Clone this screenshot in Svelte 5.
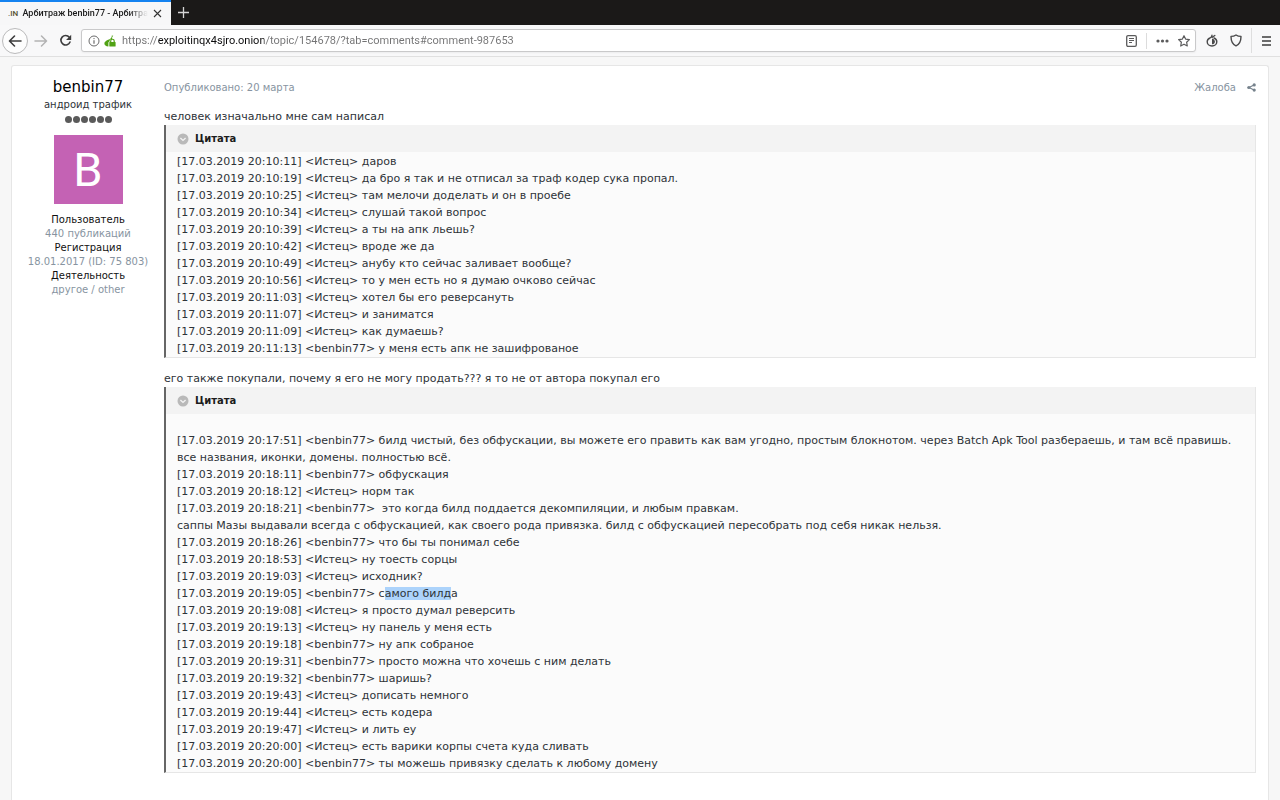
<script lang="ts">
	type Line = { time: string; who: string; text: string; marked?: string; tail?: string };

	const url = "https://exploitinqx4sjro.onion/topic/154678/?tab=comments#comment-987653";

	const profile = [
		["Пользователь", "440 публикаций"],
		["Регистрация", "18.01.2017 (ID: 75 803)"],
		["Деятельность", "другое / other"]
	];

	const firstLog: Line[] = [
		{ time: "20:10:11", who: "Истец", text: "даров" },
		{ time: "20:10:19", who: "Истец", text: "да бро я так и не отписал за траф кодер сука пропал." },
		{ time: "20:10:25", who: "Истец", text: "там мелочи доделать и он в проебе" },
		{ time: "20:10:34", who: "Истец", text: "слушай такой вопрос" },
		{ time: "20:10:39", who: "Истец", text: "а ты на апк льешь?" },
		{ time: "20:10:42", who: "Истец", text: "вроде же да" },
		{ time: "20:10:49", who: "Истец", text: "анубу кто сейчас заливает вообще?" },
		{ time: "20:10:56", who: "Истец", text: "то у мен есть но я думаю очково сейчас" },
		{ time: "20:11:03", who: "Истец", text: "хотел бы его реверсануть" },
		{ time: "20:11:07", who: "Истец", text: "и заниматся" },
		{ time: "20:11:09", who: "Истец", text: "как думаешь?" },
		{ time: "20:11:13", who: "benbin77", text: "у меня есть апк не зашифрованое" }
	];

	const secondLog: Line[] = [
		{
			time: "20:17:51",
			who: "benbin77",
			text: "билд чистый, без обфускации, вы можете его править как вам угодно, простым блокнотом. через Batch Apk Tool разбераешь, и там всё правишь.\nвсе названия, иконки, домены. полностью всё."
		},
		{ time: "20:18:11", who: "benbin77", text: "обфускация" },
		{ time: "20:18:12", who: "Истец", text: "норм так" },
		{
			time: "20:18:21",
			who: "benbin77",
			text: " это когда билд поддается декомпиляции, и любым правкам.\nсаппы Мазы выдавали всегда с обфускацией, как своего рода привязка. билд с обфускацией пересобрать под себя никак нельзя."
		},
		{ time: "20:18:26", who: "benbin77", text: "что бы ты понимал себе" },
		{ time: "20:18:53", who: "Истец", text: "ну тоесть сорцы" },
		{ time: "20:19:03", who: "Истец", text: "исходник?" },
		{ time: "20:19:05", who: "benbin77", text: "с", marked: "амого билд", tail: "а" },
		{ time: "20:19:08", who: "Истец", text: "я просто думал реверсить" },
		{ time: "20:19:13", who: "Истец", text: "ну панель у меня есть" },
		{ time: "20:19:18", who: "benbin77", text: "ну апк собраное" },
		{ time: "20:19:31", who: "benbin77", text: "просто можна что хочешь с ним делать" },
		{ time: "20:19:32", who: "benbin77", text: "шаришь?" },
		{ time: "20:19:43", who: "Истец", text: "дописать немного" },
		{ time: "20:19:44", who: "Истец", text: "есть кодера" },
		{ time: "20:19:47", who: "Истец", text: "и лить еу" },
		{ time: "20:20:00", who: "Истец", text: "есть варики корпы счета куда сливать" },
		{ time: "20:20:00", who: "benbin77", text: "ты можешь привязку сделать к любому домену" }
	];
</script>

{#snippet quote(lines: Line[], spaced: boolean)}
	<blockquote>
		<button class="quote-head">
			<svg width="12" height="12" viewBox="0 0 12 12">
				<circle cx="6" cy="6" r="5.5" fill="#b9b9b9" />
				<path d="M3.4 5 6 7.4 8.6 5" fill="none" stroke="#f3f3f3" stroke-width="1.4" />
			</svg>
			Цитата
		</button>
		<div class="log" class:spaced>
			{#each lines as line}
				<p>[17.03.2019 {line.time}] &lt;{line.who}&gt; {line.text}{#if line.marked}<mark>{line.marked}</mark>{line.tail}{/if}</p>
			{/each}
		</div>
	</blockquote>
{/snippet}

<div class="window">
	<div class="tabs">
		<div class="tab">
			<span class="favicon">.IN</span>
			<span class="tab-title">Арбитраж benbin77 - Арбитра</span>
			<button aria-label="Закрыть вкладку">
				<svg width="9" height="9" viewBox="0 0 9 9"><path d="M1 1l7 7M8 1 1 8" stroke="#333" stroke-width="1.1" /></svg>
			</button>
		</div>
		<button class="new-tab" aria-label="Новая вкладка">
			<svg width="11" height="11" viewBox="0 0 11 11"><path d="M5.5 0v11M0 5.5h11" stroke="#d6d5d5" stroke-width="1.3" /></svg>
		</button>
	</div>

	<div class="toolbar">
		<button class="back" aria-label="Назад">
			<svg width="14" height="12" viewBox="0 0 14 12"><path d="M13 6H2M6.5 1 1.5 6l5 5" fill="none" stroke="#3c3c3d" stroke-width="1.6" stroke-linecap="round" stroke-linejoin="round" /></svg>
		</button>
		<button class="forward" aria-label="Вперёд">
			<svg width="14" height="12" viewBox="0 0 14 12"><path d="M1 6h11M7.5 1l5 5-5 5" fill="none" stroke="#b2b2b3" stroke-width="1.5" stroke-linecap="round" stroke-linejoin="round" /></svg>
		</button>
		<button class="reload" aria-label="Обновить">
			<svg width="13" height="13" viewBox="0 0 13 13">
				<path d="M10.3 3.3A4.7 4.700 0 1 0 11 8" fill="none" stroke="#3c3c3d" stroke-width="1.6" stroke-linecap="round" />
				<path d="M12.2.8v5.100H7.1z" fill="#3c3c3d" />
			</svg>
		</button>

		<div class="address">
			<svg width="12" height="12" viewBox="0 0 12 12">
				<circle cx="6" cy="6" r="5" fill="none" stroke="#6b6b6c" />
				<path d="M6 5.2v3.5" stroke="#6b6b6c" stroke-width="1.2" />
				<circle cx="6" cy="3.6" r=".7" fill="#6b6b6c" />
			</svg>
			<svg class="onion" width="12" height="12" viewBox="0 0 12 12">
				<path d="M7.8.4C7.9 2 7.3 2.8 6 3.9 3.5 5 .4 6.1.4 8.600c0 1.700 1.500 2.900 4 2.900V7.300l1-.6C5.600 4.800 6.600 4 8.300 4 7.700 2.800 8.300 1.500 9.300.7z" fill="#51a215" />
				<path d="M6.7 7V6a1.7 1.700 0 0 1 3.500 0v1" fill="none" stroke="#51a215" stroke-width="1.2" />
				<rect x="5.3" y="6.9" width="6.3" height="4.7" rx=".6" fill="#51a215" />
			</svg>
			<input aria-label="Адрес" value={url} />
			<button aria-label="Режим чтения">
				<svg width="11" height="12" viewBox="0 0 11 12">
					<rect x=".7" y=".7" width="9.6" height="10.6" rx="1.3" fill="none" stroke="#5b5b5c" stroke-width="1.3" />
					<path d="M3 3.500h5M3 5.500h5M3 7.500h3" stroke="#5b5b5c" />
				</svg>
			</button>
			<span class="divider"></span>
			<button class="more" aria-label="Действия">
				<svg width="13" height="4" viewBox="0 0 13 4" fill="#5b5b5c"><circle cx="2" cy="2" r="1.6" /><circle cx="6.5" cy="2" r="1.6" /><circle cx="11" cy="2" r="1.6" /></svg>
			</button>
			<button class="star" aria-label="В закладки">
				<svg width="12" height="12" viewBox="0 0 12 12"><path d="M6 .7l1.6 3.4 3.800.5-2.800 2.600.7 3.800L6 9.200 2.700 11l.7-3.800L.6 4.600l3.800-.5z" fill="none" stroke="#5b5b5c" stroke-width="1.2" stroke-linejoin="round" /></svg>
			</button>
		</div>

		<button class="tor" aria-label="Tor">
			<svg width="12" height="13" viewBox="0 0 12 13">
				<path d="M6 1.200C6 2.800 5.300 3.300 4 4 2.200 4.800 1.200 6 1.200 7.700 1.200 10.200 3.300 12 6 12s4.800-1.800 4.800-4.300c0-1.700-1-2.900-2.800-3.700M6.300 3.300 8.800 1.500" fill="none" stroke="#4a4a4b" stroke-width="1.4" stroke-linecap="round" />
				<path d="M6 4.400c2 .6 2.900 1.800 2.900 3.300S7.900 10.300 6 10.300z" fill="#4a4a4b" />
			</svg>
		</button>
		<button class="shield" aria-label="Уровень безопасности">
			<svg width="12" height="13" viewBox="0 0 12 13"><path d="M6 1c1.500 1 3.200 1.400 5 1.400 0 4.800-1.200 7.600-5 9.500-3.800-1.900-5-4.700-5-9.500C2.800 2.400 4.500 2 6 1z" fill="none" stroke="#4a4a4b" stroke-width="1.4" stroke-linejoin="round" /></svg>
		</button>
		<button class="menu" aria-label="Меню">
			<svg width="9" height="10" viewBox="0 0 9 10"><path d="M0 1h9M0 5h9M0 9h9" stroke="#3c3c3d" stroke-width="1.3" /></svg>
		</button>
	</div>

	<main>
		<article>
			<aside>
				<h3>benbin77</h3>
				<div class="rank">андроид трафик</div>
				<div class="pips">
					{#each Array(6) as _}
						<i></i>
					{/each}
				</div>
				<div class="avatar">B</div>
				<dl>
					{#each profile as [name, value]}
						<dt>{name}</dt>
						<dd>{value}</dd>
					{/each}
				</dl>
			</aside>

			<section>
				<header>
					<span>Опубликовано: 20 марта</span>
					<a class="report" href="#report">Жалоба</a>
					<a class="share" href="#share" aria-label="Поделиться">
						<svg width="9" height="9" viewBox="0 0 9 9">
							<path d="M7 2 2 4.500 7 7" fill="none" stroke="#76828c" stroke-width="1.2" />
							<g fill="#76828c"><circle cx="7.2" cy="1.9" r="1.6" /><circle cx="1.8" cy="4.5" r="1.6" /><circle cx="7.2" cy="7.1" r="1.6" /></g>
						</svg>
					</a>
				</header>
				<p>человек изначально мне сам написал</p>
				{@render quote(firstLog, false)}
				<p>его также покупали, почему я его не могу продать??? я то не от автора покупал его</p>
				{@render quote(secondLog, true)}
			</section>
		</article>
	</main>
</div>

<style>
	:global(body) {
		margin: 0;
		background: #f7f7f7;
	}

	.window {
		display: flex;
		flex-direction: column;
		min-height: 100vh;
		font-family: "DejaVu Sans", Verdana, sans-serif;
		font-size: 11px;
		line-height: 17px;
		color: #2e3338;
	}

	button {
		display: flex;
		align-items: center;
		justify-content: center;
		padding: 0;
		border: 0;
		background: none;
	}

	svg {
		flex: none;
	}

	/* browser chrome */
	.tabs {
		display: flex;
		height: 25px;
		background: #1b1918;
		font-family: Roboto, sans-serif;
	}

	.tab {
		display: flex;
		align-items: center;
		box-sizing: border-box;
		width: 171px;
		padding: 0 9px 0 8px;
		border-top: 2px solid #1583f0;
		background: #f7f7f8;
		color: #1a1a1a;
	}

	.favicon {
		width: 16px;
		font-size: 8px;
		font-weight: 500;
		color: #55502f;
	}

	.tab-title {
		flex: 1;
		white-space: nowrap;
		font-size: 9px;
		font-weight: 500;
		mask-image: linear-gradient(to right, #000 84%, transparent);
	}

	.tab button {
		margin-left: 5px;
	}

	.new-tab {
		width: 25px;
	}

	.toolbar {
		display: flex;
		align-items: center;
		height: 31px;
		padding-left: 2px;
		border-bottom: 1px solid #e0e0e0;
		background: #f8f8f9;
	}

	.back {
		width: 26px;
		height: 26px;
		border: 1px solid #bababb;
		border-radius: 50%;
		background: #fdfdfd;
	}

	.forward {
		width: 25px;
	}

	.reload {
		width: 24px;
	}

	.address {
		display: flex;
		flex: 1;
		align-items: center;
		box-sizing: border-box;
		height: 23px;
		margin-left: 4px;
		padding: 0 5px 0 6px;
		border: 1px solid #c9c9ca;
		border-radius: 3px;
		background: #fff;
		box-shadow: 0 1px 2px #0000000d;
	}

	.onion {
		margin: 0 6px 0 4px;
	}

	/* host name is darker than the rest of the address */
	.address input {
		flex: 1;
		min-width: 0;
		padding: 0;
		border: 0;
		outline: 0;
		font-family: Roboto, sans-serif;
		font-size: 11px;
		color: transparent;
		background: linear-gradient(to right, #737374 35px, #0c0c0d 35px 142px, #737374 142px);
		background-clip: text;
	}

	.divider {
		width: 1px;
		height: 16px;
		margin: 0 9px;
		background: #dcdcdc;
	}

	.star {
		margin-left: 9px;
	}

	.tor {
		width: 31px;
	}

	.shield {
		width: 18px;
	}

	.menu {
		width: 29px;
		height: 25px;
		margin-left: 6px;
		border-left: 1px solid #dedede;
	}

	/* topic */
	main {
		display: flex;
		flex: 1;
		padding: 8px 11px 0;
	}

	article {
		display: flex;
		flex: 1;
		min-width: 0;
		padding: 10px 12px 27px 0;
		border: 1px solid #e6e6e6;
		border-bottom: 0;
		border-radius: 3px 3px 0 0;
		background: #fff;
	}

	aside {
		flex: none;
		width: 152px;
		text-align: center;
	}

	h3 {
		margin: 0;
		font-size: 15px;
		font-weight: 400;
		line-height: 22px;
		color: #000;
	}

	.rank {
		line-height: 14px;
		font-size: 10px;
	}

	.pips {
		display: flex;
		justify-content: center;
		gap: 1px;
		margin: 4px 0 12px;
	}

	.pips i {
		width: 7px;
		height: 7px;
		border-radius: 50%;
		background: #5a5a5a;
	}

	.avatar {
		width: 69px;
		margin: 0 auto 9px;
		background: #c462b4;
		color: #fff;
		font-family: Roboto, sans-serif;
		font-size: 47px;
		line-height: 69px;
	}

	dl {
		margin: 0;
		font-size: 10px;
		line-height: 14px;
	}

	dt {
		color: #111;
	}

	dd {
		margin: 0;
		color: #8794a1;
	}

	section {
		flex: 1;
		min-width: 0;
	}

	header {
		display: flex;
		align-items: center;
		height: 22px;
		margin-bottom: 10px;
		font-size: 10px;
		color: #8794a1;
	}

	.report {
		margin-left: auto;
		color: inherit;
		text-decoration: none;
	}

	.share {
		display: flex;
		margin-left: 11px;
	}

	p {
		margin: 0;
	}

	blockquote {
		margin: 0 0 12px;
		border: 1px solid #e6e6e6;
		border-top: 0;
		border-left: 2px solid #666;
		background: #fbfbfb;
	}

	.quote-head {
		justify-content: flex-start;
		gap: 6px;
		width: 100%;
		height: 27px;
		padding: 0 11px;
		background: #f3f3f3;
		font: bold 10px "DejaVu Sans", Verdana, sans-serif;
		color: #1c1c1c;
	}

	.log {
		padding: 1px 11px 0;
	}

	.log.spaced {
		padding-top: 18px;
	}

	.log p {
		white-space: pre-wrap;
	}

	mark {
		background: #acd3fb;
		color: inherit;
	}
</style>
